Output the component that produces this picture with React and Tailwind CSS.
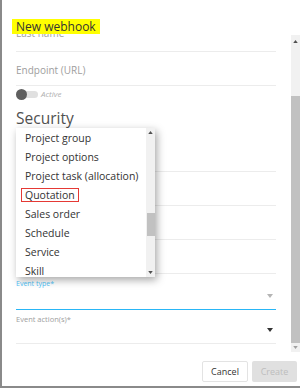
import { useState } from 'react';

const options = [
  'Project group',
  'Project options',
  'Project task (allocation)',
  'Quotation',
  'Sales order',
  'Schedule',
  'Service',
  'Skill',
];

function Caret({ className }) {
  return (
    <svg viewBox="0 0 6 4" className={className}>
      <path d="M0 0h6L3 4z" fill="currentColor" />
    </svg>
  );
}

function CaretUp({ className }) {
  return (
    <svg viewBox="0 0 6 4" className={className}>
      <path d="M0 4h6L3 0z" fill="currentColor" />
    </svg>
  );
}

function Field({ label, top = 'pt-[10px]' }) {
  return (
    <div className={`h-[34px] border-b border-[#ececec] ${top}`}>
      {label && <div className="text-[10px] leading-[16px] text-[#9e9e9e]">{label}</div>}
    </div>
  );
}

export default function App() {
  const [selected] = useState('Quotation');

  return (
    <div className="w-[300px] h-[388px] bg-[#8a8a8a] overflow-hidden font-['Open_Sans',sans-serif]">
      <div className="ml-[2px] h-[386px] bg-white flex flex-col">
        {/* Header */}
        <div className="h-[34px] pl-[10px] pt-[13px]">
          <span className="bg-[#ffff00] px-[4px] text-[12px] leading-[15px] text-[#333] inline-block">New webhook</span>
        </div>

        {/* Scroll area */}
        <div className="h-[318px] flex overflow-hidden">
          <div className="flex-1 pl-[14px] pr-[15px] overflow-hidden relative">
            <div className="-mt-[16px]">
              <Field label="Last name" top="pt-[7px]" />
              <Field label="Endpoint (URL)" />
              <div className="h-[16px] flex items-center">
                <div className="relative w-[22px] h-[11px] flex items-center">
                  <div className="absolute left-[3px] right-0 h-[7px] rounded-full bg-[#e0e0e0]" />
                  <div className="relative w-[11px] h-[11px] rounded-full bg-[#5f5f5f]" />
                </div>
                <span className="ml-[3px] text-[8px] italic text-[#b0b0b0]">Active</span>
              </div>
              <div className="h-[36px] pt-[4px] text-[15.5px] leading-[24px] text-[#505050]">Security</div>
              <Field />
              <Field />
              <Field />
              <Field />
              <div className="h-[36px] border-b-[1.5px] border-[#29b6f6] pt-[4px]">
                <div className="text-[7px] leading-[12px] text-[#4fc3f7]">Event type*</div>
                <div className="flex justify-end pr-[3px] pt-[4px]">
                  <Caret className="w-[6px] h-[4px] text-[#b5b5b5]" />
                </div>
              </div>
              <div className="h-[34px] border-b border-[#ececec] pt-[3px]">
                <div className="text-[7.5px] leading-[12px] text-[#9e9e9e]">Event action(s)*</div>
                <div className="flex justify-end pr-[3px] pt-[3px]">
                  <Caret className="w-[6px] h-[4px] text-[#333]" />
                </div>
              </div>
            </div>

            {/* Open select menu */}
            <div className="absolute left-[14px] top-[94px] w-[139px] h-[149px] bg-white shadow-[2px_3px_8px_rgba(0,0,0,0.35)] flex">
              <div className="flex-1 overflow-hidden">
                {options.map((opt) => (
                  <div key={opt} className="h-[19px] pl-[5px] flex items-center">
                    <span
                      className={
                        opt === selected
                          ? 'border border-[#e53935] px-[3px] text-[10.5px] leading-[12px] text-[#333]'
                          : 'px-[4px] text-[10.5px] leading-[12px] text-[#333]'
                      }
                    >
                      {opt}
                    </span>
                  </div>
                ))}
              </div>
              <div className="w-[9px] bg-[#f1f1f1] flex flex-col items-center py-[3px]">
                <CaretUp className="w-[5px] h-[3px] text-[#505050]" />
                <div className="h-[79px]" />
                <div className="w-[8px] h-[23px] bg-[#c1c1c1]" />
                <div className="flex-1" />
                <Caret className="w-[5px] h-[3px] text-[#505050]" />
              </div>
            </div>
          </div>

          {/* Outer scrollbar */}
          <div className="w-[9px] bg-[#f1f1f1] flex flex-col items-center pt-[5px] pb-[3px] mt-[1px]">
            <CaretUp className="w-[5px] h-[3px] text-[#505050]" />
            <div className="h-[53px]" />
            <div className="w-[9px] flex-1 bg-[#c1c1c1]" />
            <div className="h-[3px]" />
            <Caret className="w-[5px] h-[3px] text-[#a0a0a0]" />
          </div>
        </div>

        {/* Footer */}
        <div className="flex-1 flex justify-end items-start pt-[9px] pr-[3px] gap-[4px]">
          <button className="w-[46px] h-[21px] rounded-[2px] border border-[#e3e3e3] bg-white text-[9px] text-[#333]">
            Cancel
          </button>
          <button className="w-[45px] h-[21px] rounded-[2px] bg-[#e0e0e0] text-[9px] text-[#bdbdbd]">
            Create
          </button>
        </div>
      </div>
    </div>
  );
}
